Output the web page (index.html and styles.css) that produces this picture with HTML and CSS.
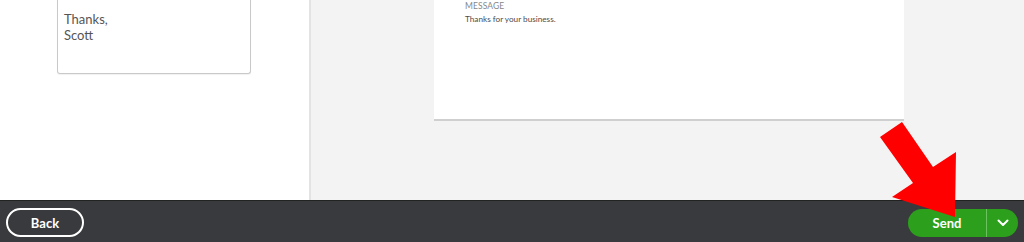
FILE: index.html
```html
<!DOCTYPE html>
<html>
<head>
<meta charset="utf-8">
<link rel="stylesheet" href="styles.css">
</head>
<body>
<div class="page">
  <div class="main">
    <div class="left">
      <div class="note">
        <div>Thanks,</div>
        <div>Scott</div>
      </div>
    </div>
    <div class="preview">
      <div class="card">
        <div class="label">MESSAGE</div>
        <div class="msg">Thanks for your business.</div>
      </div>
    </div>
  </div>
  <div class="footer">
    <button class="back">Back</button>
    <div class="send">
      <span class="send-main">Send</span>
      <span class="send-menu">
        <svg width="12" height="8" viewBox="0 0 12 8"><path d="M1.5 1.5 L6 6 L10.5 1.5" fill="none" stroke="#fff" stroke-width="2" stroke-linecap="round" stroke-linejoin="round"/></svg>
      </span>
    </div>
  </div>
  <svg class="arrow" width="1024" height="242" viewBox="0 0 1024 242">
    <polygon points="880,137 902,122 933,167 956,152 955,217 892,197 913,183" fill="#ff0000"/>
  </svg>
</div>
</body>
</html>
```
FILE: styles.css
```css
html, body {
  margin: 0;
  padding: 0;
}
body {
  width: 1024px;
  height: 242px;
  overflow: hidden;
  font-family: Lato, "Open Sans", sans-serif;
  background: #fff;
}
.page {
  position: relative;
  width: 1024px;
  height: 242px;
  display: flex;
  flex-direction: column;
}
.main {
  display: flex;
  height: 200px;
}
.left {
  width: 309px;
  border-right: 2px solid #e3e3e3;
  background: #fff;
}
.note {
  margin-left: 57px;
  width: 180px;
  height: 62px;
  padding: 11px 6px 0 6px;
  border: 1px solid #c9c9c9;
  border-top: none;
  border-radius: 0 0 3px 3px;
  box-shadow: 0 1px 1px rgba(0,0,0,0.06);
  font-size: 13px;
  line-height: 16px;
  color: #555;
}
.preview {
  flex: 1;
  background: #f3f3f3;
  padding-left: 123px;
}
.card {
  width: 439px;
  height: 119px;
  padding: 0 0 0 31px;
  background: #fff;
  border-bottom: 2px solid #cfcfcf;
}
.label {
  padding-top: 1px;
  font-size: 8.5px;
  line-height: 11px;
  color: #86888c;
  letter-spacing: 0.1px;
}
.msg {
  margin-top: 2px;
  font-size: 8.2px;
  line-height: 11px;
  color: #4a4b4e;
}
.footer {
  height: 41px;
  background: #393a3d;
  border-top: 1px solid #222;
  display: flex;
  align-items: center;
  justify-content: space-between;
  padding: 0 6px;
}
.back {
  width: 78px;
  height: 29px;
  border: 2px solid #fff;
  border-radius: 15px;
  background: transparent;
  color: #fff;
  font-family: Lato, "Open Sans", sans-serif;
  font-weight: 700;
  font-size: 13px;
  padding: 0;
  margin-top: 2px;
}
.send {
  display: flex;
  width: 110px;
  height: 28px;
  margin-top: 2px;
  border-radius: 14px;
  background: #2ca01c;
  color: #fff;
  overflow: hidden;
}
.send-main {
  width: 78px;
  display: flex;
  align-items: center;
  justify-content: center;
  font-weight: 700;
  font-size: 13px;
  border-right: 1px solid #6cc25e;
}
.send-menu {
  flex: 1;
  display: flex;
  align-items: center;
  justify-content: center;
}
.arrow {
  position: absolute;
  left: 0;
  top: 0;
  pointer-events: none;
}
```
